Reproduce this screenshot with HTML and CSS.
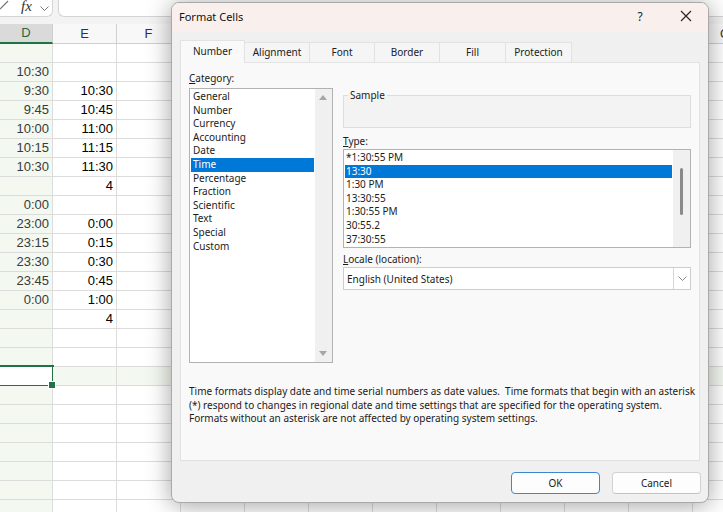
FILE: index.html
```html
<!DOCTYPE html>
<html>
<head>
<meta charset="utf-8">
<title>Format Cells</title>
<link rel="stylesheet" href="styles.css">
</head>
<body>
<div class="app">
  <div class="fbar">
    <div class="fxbox">
      <svg class="check" width="10" height="10" viewBox="0 0 10 10"><path d="M0 9 L8 1" stroke="#777" stroke-width="1.2" fill="none"/></svg>
      <span class="fx">fx</span>
      <svg class="chev" width="9" height="6" viewBox="0 0 9 6"><path d="M0.5 0.5 L4.5 4.5 L8.5 0.5" stroke="#777" stroke-width="1" fill="none"/></svg>
    </div>
    <div class="finput"></div>
  </div>

  <div class="sheet">
    <div class="row hdr">
      <div class="c d">D</div><div class="c">E</div><div class="c">F</div>
      <div class="c rest"><span>G</span><span>H</span><span>I</span><span>J</span><span>K</span><span>L</span><span>M</span><span>N</span><span>O</span></div>
    </div>
    <div class="row"><div class="c d"></div><div class="c"></div><div class="c"></div><div class="c rest"></div></div>
    <div class="row"><div class="c d">10:30</div><div class="c"></div><div class="c"></div><div class="c rest"></div></div>
    <div class="row"><div class="c d">9:30</div><div class="c">10:30</div><div class="c"></div><div class="c rest"></div></div>
    <div class="row"><div class="c d">9:45</div><div class="c">10:45</div><div class="c"></div><div class="c rest"></div></div>
    <div class="row"><div class="c d">10:00</div><div class="c">11:00</div><div class="c"></div><div class="c rest"></div></div>
    <div class="row"><div class="c d">10:15</div><div class="c">11:15</div><div class="c"></div><div class="c rest"></div></div>
    <div class="row"><div class="c d">10:30</div><div class="c">11:30</div><div class="c"></div><div class="c rest"></div></div>
    <div class="row"><div class="c d"></div><div class="c">4</div><div class="c"></div><div class="c rest"></div></div>
    <div class="row"><div class="c d">0:00</div><div class="c"></div><div class="c"></div><div class="c rest"></div></div>
    <div class="row"><div class="c d">23:00</div><div class="c">0:00</div><div class="c"></div><div class="c rest"></div></div>
    <div class="row"><div class="c d">23:15</div><div class="c">0:15</div><div class="c"></div><div class="c rest"></div></div>
    <div class="row"><div class="c d">23:30</div><div class="c">0:30</div><div class="c"></div><div class="c rest"></div></div>
    <div class="row"><div class="c d">23:45</div><div class="c">0:45</div><div class="c"></div><div class="c rest"></div></div>
    <div class="row"><div class="c d">0:00</div><div class="c">1:00</div><div class="c"></div><div class="c rest"></div></div>
    <div class="row"><div class="c d"></div><div class="c">4</div><div class="c"></div><div class="c rest"></div></div>
    <div class="row"><div class="c d"></div><div class="c"></div><div class="c"></div><div class="c rest"></div></div>
    <div class="row"><div class="c d"></div><div class="c"></div><div class="c"></div><div class="c rest"></div></div>
    <div class="row selrow"><div class="c d sel"></div><div class="c"></div><div class="c"></div><div class="c rest"></div></div>
    <div class="row"><div class="c d"></div><div class="c"></div><div class="c"></div><div class="c rest"></div></div>
    <div class="row"><div class="c d"></div><div class="c"></div><div class="c"></div><div class="c rest"></div></div>
    <div class="row"><div class="c d"></div><div class="c"></div><div class="c"></div><div class="c rest"></div></div>
    <div class="row"><div class="c d"></div><div class="c"></div><div class="c"></div><div class="c rest"></div></div>
    <div class="row"><div class="c d"></div><div class="c"></div><div class="c"></div><div class="c rest"></div></div>
    <div class="row"><div class="c d"></div><div class="c"></div><div class="c"></div><div class="c rest"></div></div>
    <div class="row"><div class="c d"></div><div class="c"></div><div class="c"></div><div class="c rest"></div></div>
  </div>

  <div class="dialog">
    <div class="titlebar">
      <span class="title">Format Cells</span>
      <span class="help">?</span>
      <svg class="close" width="12" height="12" viewBox="0 0 12 12"><path d="M1 1 L11 11 M11 1 L1 11" stroke="#222" stroke-width="1.1" fill="none"/></svg>
    </div>
    <div class="dbody">
      <div class="tabs">
        <div class="tab active w65">Number</div>
        <div class="tab w65">Alignment</div>
        <div class="tab w65">Font</div>
        <div class="tab w65">Border</div>
        <div class="tab w66">Fill</div>
        <div class="tab w66">Protection</div>
      </div>
      <div class="panel">
        <div class="cols">
          <div class="left">
            <div class="lbl"><u>C</u>ategory:</div>
            <div class="listbox cat">
              <div class="items">
                <div class="item">General</div>
                <div class="item">Number</div>
                <div class="item">Currency</div>
                <div class="item">Accounting</div>
                <div class="item">Date</div>
                <div class="item sel">Time</div>
                <div class="item">Percentage</div>
                <div class="item">Fraction</div>
                <div class="item">Scientific</div>
                <div class="item">Text</div>
                <div class="item">Special</div>
                <div class="item">Custom</div>
              </div>
              <div class="vscroll">
                <span class="arr up"></span>
                <span class="arr down"></span>
              </div>
            </div>
          </div>
          <div class="right">
            <fieldset class="sample"><legend>Sample</legend><div class="sample-val"></div></fieldset>
            <div class="lbl gap"><u>T</u>ype:</div>
            <div class="listbox type">
              <div class="items">
                <div class="item">*1:30:55 PM</div>
                <div class="item sel">13:30</div>
                <div class="item">1:30 PM</div>
                <div class="item">13:30:55</div>
                <div class="item">1:30:55 PM</div>
                <div class="item">30:55.2</div>
                <div class="item">37:30:55</div>
              </div>
              <div class="vscroll"><span class="thumb"></span></div>
            </div>
            <div class="lbl gap2"><u>L</u>ocale (location):</div>
            <div class="select">
              <span class="sel-text">English (United States)</span>
              <span class="dd"><svg width="9" height="6" viewBox="0 0 9 6"><path d="M0.5 0.5 L4.5 4.5 L8.5 0.5" stroke="#888" stroke-width="1" fill="none"/></svg></span>
            </div>
          </div>
        </div>
        <p class="desc">Time formats display date and time serial numbers as date values.&nbsp; Time formats that begin with an asterisk<br>(*) respond to changes in regional date and time settings that are specified for the operating system.<br>Formats without an asterisk are not affected by operating system settings.</p>
      </div>
      <div class="buttons">
        <button class="btn ok">OK</button>
        <button class="btn">Cancel</button>
      </div>
    </div>
  </div>
</div>
</body>
</html>
```

FILE: styles.css
```css
* { box-sizing: border-box; }
html, body { margin: 0; padding: 0; }
body {
  width: 723px; height: 512px; overflow: hidden; background: #fff;
  font-family: "Noto Sans", "Open Sans", sans-serif;
}
.app { width: 723px; height: 512px; overflow: hidden; position: relative; }

/* formula bar */
.fbar { height: 24px; background: #f3f3f3; display: flex; align-items: flex-start; gap: 5px; }
.fxbox {
  width: 53px; height: 17px; background: #fff; position: relative;
  border-right: 1px solid #d4d4d4; border-bottom: 1px solid #d4d4d4; border-radius: 0 0 6px 0;
}
.fxbox .check { position: absolute; left: 0; top: 0; }
.fx { position: absolute; left: 21px; top: -2px; font: italic 15px/17px "Liberation Serif", serif; color: #333; }
.fxbox .chev { position: absolute; left: 40px; top: 6px; }
.finput {
  flex: 1; height: 17px; background: #fff;
  border-left: 1px solid #d4d4d4; border-bottom: 1px solid #d4d4d4; border-radius: 0 0 0 6px;
}

/* sheet */
.sheet { display: flex; flex-direction: column; }
.row {
  display: grid; grid-template-columns: 53px 64px 64px 1fr; height: 19px;
  font-family: "Liberation Sans", Arial, sans-serif; font-size: 13px;
}
.c {
  border-right: 1px solid #dcdcdc; border-bottom: 1px solid #dcdcdc;
  text-align: right; padding-right: 3px; line-height: 18px; color: #000; background: #fff;
  position: relative;
}
.c.d { background: #f3f8f0; color: #3a3a3a; }
.c.rest {
  border-right: 0;
  background-image: repeating-linear-gradient(to right, transparent 0 63px, #dcdcdc 63px 64px);
}
.hdr { height: 20px; }
.hdr .c {
  text-align: center; padding: 0; line-height: 19px; color: #333;
  background-color: #f8f8f8; border-right-color: #cfcfcf; border-bottom-color: #cfcfcf;
}
.hdr .c.d { background: #dadada; color: #1d6b3f; border-bottom: 2px solid #217346; line-height: 18px; }
.hdr .c.rest {
  display: flex; background-image: repeating-linear-gradient(to right, transparent 0 63px, #cfcfcf 63px 64px);
}
.hdr .c.rest span { width: 64px; flex: none; text-align: center; }
.selrow .c { background-color: #f3f8f0; }
.c.sel { background: #fff; }
.c.sel::after {
  content: ""; position: absolute; left: -4px; top: -2px; right: -2px; bottom: -2px;
  border: 2px solid #217346;
}
.c.sel::before {
  content: ""; position: absolute; right: -4px; bottom: -4px; width: 6px; height: 6px;
  background: #217346; border: 1px solid #fff; z-index: 1;
}

/* dialog */
.dialog {
  position: absolute; left: 171px; top: 2px; width: 538px; height: 501px;
  background: #f0f0f0; border: 1px solid #a9a9a9; border-radius: 8px;
  box-shadow: 0 2px 24px rgba(0,0,0,0.38);
  display: flex; flex-direction: column; overflow: hidden;
  font-size: 10px; color: #1b1b1b;
}
.titlebar {
  height: 29px; flex: none; background: #f9f0ee; display: flex; align-items: center;
  padding: 0 0 3px 7px;
}
.title { flex: 1; font-size: 11px; color: #111; }
.help { width: 20px; text-align: center; font-size: 12px; color: #222; margin-right: 26px; }
.close { margin-right: 16px; margin-left: 4px; }
.dbody { flex: 1; display: flex; flex-direction: column; padding: 8px 7px 8px 8px; }

.tabs { display: flex; align-items: flex-end; height: 22px; flex: none; }
.tab {
  height: 20px; line-height: 19px; text-align: center; background: #f5f5f5;
  border: 1px solid #e2e2e2; border-bottom: 0; border-left: 0; color: #222;
}
.tab.w65 { width: 65px; }
.tab.w66 { width: 66px; }
.tab.active {
  line-height: 21px; background: #f9f9f9; border-left: 1px solid #e2e2e2;
  margin-bottom: -1px; position: relative; z-index: 1; height: 23px;
}

.panel {
  height: 399px; flex: none; margin-right: 1px; background: #f9f9f9; border: 1px solid #e2e2e2;
  padding: 8px 8px 0 8px; display: flex; flex-direction: column;
}
.cols { display: grid; grid-template-columns: 144px 348px; column-gap: 10px; }
.lbl { height: 14px; line-height: 14px; margin-bottom: 3px; }
.lbl.gap { margin-top: 6px; margin-bottom: 1px; }
.lbl.gap2 { margin-top: 4px; margin-bottom: 1px; }

.listbox { background: #fff; border: 1px solid #b2b2b2; display: flex; }
.cat { height: 275px; }
.type { height: 99px; }
.items { flex: 1; padding: 1px 1px 0 1px; }
.item { height: 13.6px; line-height: 13.6px; padding-left: 2px; white-space: nowrap; color: #1b1b1b; }
.type .item { padding-left: 1px; }
.item.sel { background: #0078d7; color: #fff; }
.vscroll { width: 17px; flex: none; background: #f0f0f0; position: relative; }
.arr { position: absolute; left: 4px; width: 0; height: 0; border-left: 4px solid transparent; border-right: 4px solid transparent; }
.arr.up { top: 6px; border-bottom: 5px solid #a6a6a6; }
.arr.down { bottom: 6px; border-top: 5px solid #a6a6a6; }
.thumb { position: absolute; left: 7px; top: 18px; width: 3px; height: 47px; background: #8a8a8a; border-radius: 2px; }

.sample {
  margin: 17px 0 0 0; padding: 0; border: 1px solid #dddddd; background: #f3f3f3; min-width: 0;
}
.sample legend { margin-left: 4px; padding: 0 2px; line-height: 14px; font-size: 10px; }
.sample-val { height: 25px; }

.select {
  height: 23px; background: #fff; border: 1px solid #cdcdcd; display: flex; align-items: center;
}
.sel-text { flex: 1; padding-left: 3px; }
.dd {
  width: 17px; height: 21px; border-left: 1px solid #d6d6d6; display: flex; align-items: center; justify-content: center;
}

.desc { margin: 22px 0 0 0; line-height: 13.5px; color: #1b1b1b; white-space: nowrap; }

.buttons { display: flex; justify-content: flex-end; gap: 12px; margin-top: 11px; }
.btn {
  width: 89px; height: 22px; background: #fdfdfd; border: 1px solid #d3d3d3; border-bottom-color: #c2c2c2;
  border-radius: 4px; font-family: "Noto Sans", "Open Sans", sans-serif; font-size: 10px; color: #1b1b1b; padding: 0;
}
.btn.ok { border: 1px solid #3d86d1; }
```
